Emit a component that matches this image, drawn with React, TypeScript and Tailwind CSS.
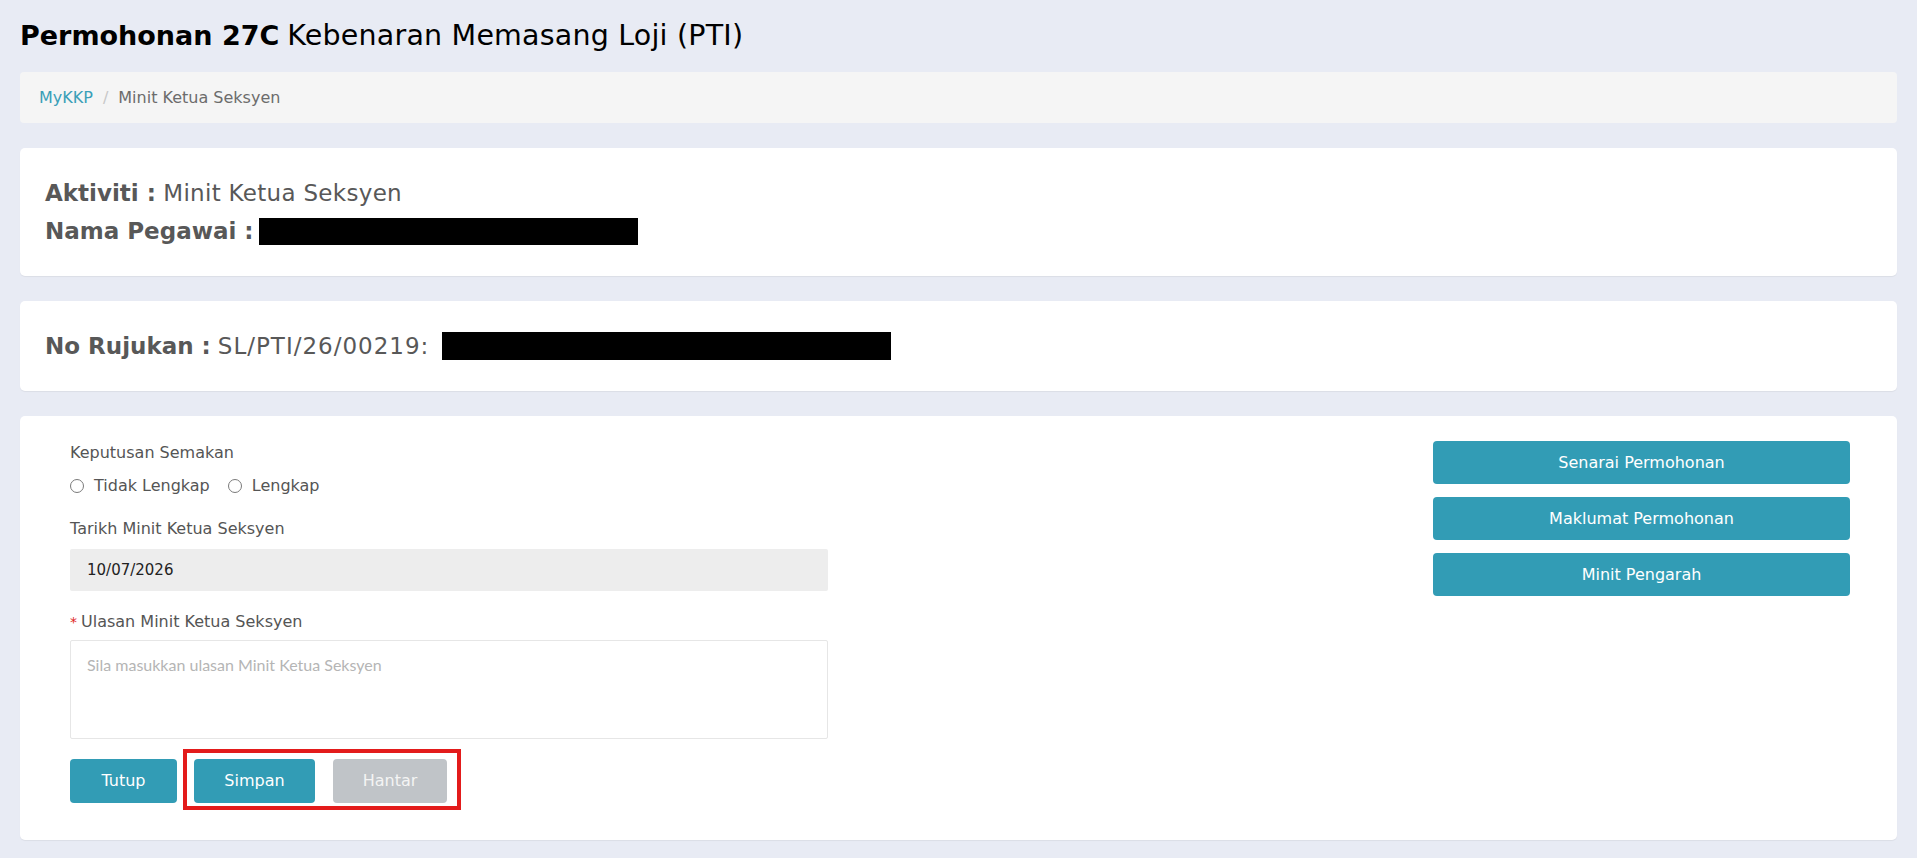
const font = { fontFamily: "'DejaVu Sans', Verdana, sans-serif" };

const Radio = ({ label }: { label: string }) => (
	<label className="flex items-center gap-[10px]">
		<span className="w-[14px] h-[14px] rounded-full border border-[#7a7a7a] bg-white" />
		<span>{label}</span>
	</label>
);

const App = () => {
	return (
		<div className="min-h-[858px] bg-[#e8ebf4] px-5 pb-6" style={font}>
			<h1 className="h-[72px] flex items-center text-[28.5px] text-black">
				<span className="font-bold mr-[8px] text-[27px]">Permohonan 27C</span>
				<span className="tracking-[0.2px]">Kebenaran Memasang Loji (PTI)</span>
			</h1>

			<nav className="h-[51px] rounded-[4px] bg-[#f5f5f5] px-[19px] flex items-center text-[16px]">
				<span className="text-[#3a9fb8]">MyKKP</span>
				<span className="mx-[10px] text-[#c8c8c8]">/</span>
				<span className="text-[#6c6c6c]">Minit Ketua Seksyen</span>
			</nav>

			<div className="mt-[25px] rounded-[5px] bg-white px-[25px] py-[26px] text-[23px] leading-[38px] text-[#585858] shadow-[0_1px_1px_rgba(0,0,0,0.06)]">
				<div>
					<span className="font-bold">Aktiviti :</span> <span className="tracking-[0.3px]">Minit Ketua Seksyen</span>
				</div>
				<div className="flex items-center">
					<span className="font-bold mr-[5px]">Nama Pegawai :</span>
					<span className="inline-block w-[379px] h-[27px] bg-black" />
				</div>
			</div>

			<div className="mt-[25px] rounded-[5px] bg-white px-[25px] py-[26px] text-[23px] leading-[38px] text-[#585858] shadow-[0_1px_1px_rgba(0,0,0,0.06)]">
				<div className="flex items-center">
					<span className="font-bold mr-[7px]">No Rujukan :</span>
					<span className="mr-[13px] tracking-[1px]">SL/PTI/26/00219:</span>
					<span className="inline-block w-[449px] h-[28px] bg-black" />
				</div>
			</div>

			<div className="mt-[25px] rounded-[5px] bg-white pl-[50px] pr-[47px] pt-[25px] pb-[37px] flex shadow-[0_1px_1px_rgba(0,0,0,0.06)]">
				<div className="w-[758px] text-[16px] text-[#555]">
					<div className="leading-[20px] mt-[2px]">Keputusan Semakan</div>
					<div className="flex items-center gap-[18px] mt-[13px] leading-[20px]">
						<Radio label="Tidak Lengkap" />
						<Radio label="Lengkap" />
					</div>
					<div className="leading-[20px] mt-[23px]">Tarikh Minit Ketua Seksyen</div>
					<div className="mt-[10px] h-[42px] rounded-[2px] bg-[#ededed] px-[17px] flex items-center text-[15px] text-[#222]">
						10/07/2026
					</div>
					<div className="leading-[20px] mt-[21px]">
						<span className="text-[#e02424] mr-[4px] text-[14px]">*</span>Ulasan Minit Ketua Seksyen
					</div>
					<div
						className="mt-[8px] h-[99px] rounded-[2px] border border-[#e6e6e6] px-[16px] py-[12px] text-[16px] text-[#b5b5b5]"
						style={{ fontFamily: "Lato, 'Open Sans', sans-serif" }}
					>
						Sila masukkan ulasan Minit Ketua Seksyen
					</div>
					<div className="mt-[20px] flex items-center text-[16px] text-white">
						<button className="h-[44px] w-[107px] rounded-[4px] bg-[#329cb5]">Tutup</button>
						<div className="relative ml-[17px] flex items-center gap-[18px]">
							<button className="h-[44px] w-[121px] rounded-[4px] bg-[#329cb5]">Simpan</button>
							<button className="h-[44px] w-[114px] rounded-[4px] bg-[#c0c4c8] text-[#f4f4f4]">Hantar</button>
							<span className="absolute -left-[11px] -right-[14px] -top-[10px] -bottom-[7px] border-[4px] border-[#e31b1b]" />
						</div>
					</div>
				</div>

				<div className="ml-auto w-[417px] flex flex-col gap-[13px] text-[16px] text-white">
					<button className="h-[43px] rounded-[4px] bg-[#329cb5]">Senarai Permohonan</button>
					<button className="h-[43px] rounded-[4px] bg-[#329cb5]">Maklumat Permohonan</button>
					<button className="h-[43px] rounded-[4px] bg-[#329cb5]">Minit Pengarah</button>
				</div>
			</div>
		</div>
	);
};

export default App;
